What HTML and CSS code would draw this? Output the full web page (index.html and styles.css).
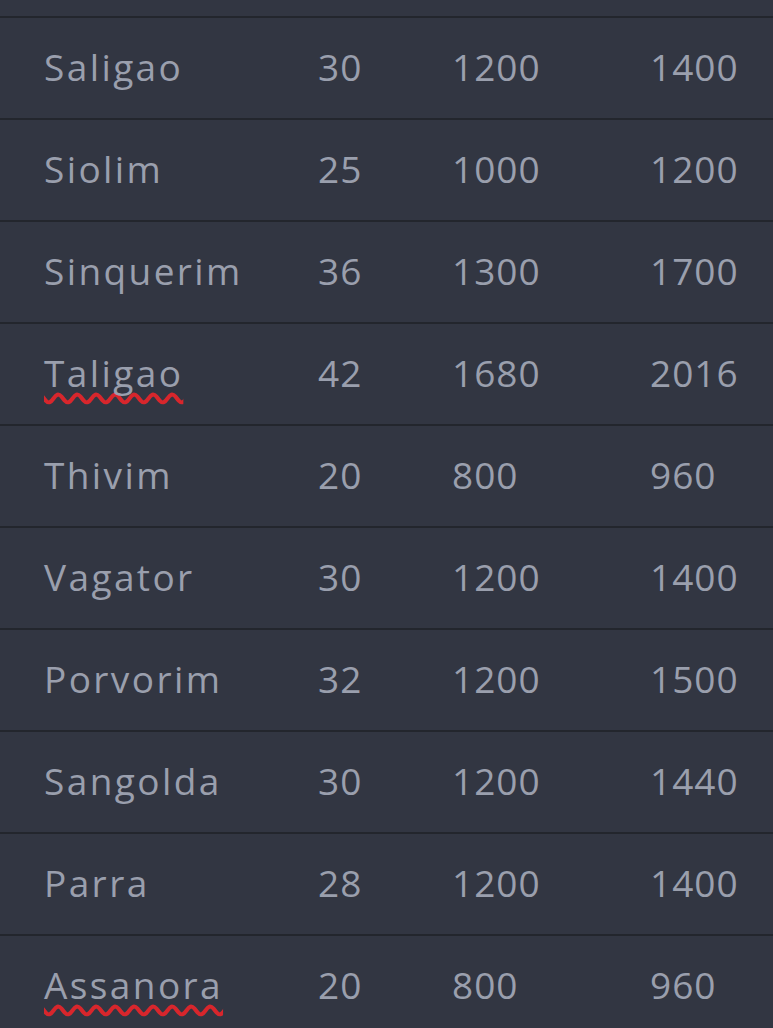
FILE: index.html
```html
<!DOCTYPE html>
<html lang="en">
<head>
<meta charset="utf-8">
<title>Rates</title>
<link rel="stylesheet" href="styles.css">
</head>
<body>
<div class="table">
  <div class="row row-partial"></div>
  <div class="row"><span class="name">Saligao</span><span>30</span><span>1200</span><span>1400</span></div>
  <div class="row"><span class="name">Siolim</span><span>25</span><span>1000</span><span>1200</span></div>
  <div class="row"><span class="name">Sinquerim</span><span>36</span><span>1300</span><span>1700</span></div>
  <div class="row"><span class="name misspelled">Taligao</span><span>42</span><span>1680</span><span>2016</span></div>
  <div class="row"><span class="name">Thivim</span><span>20</span><span>800</span><span>960</span></div>
  <div class="row"><span class="name">Vagator</span><span>30</span><span>1200</span><span>1400</span></div>
  <div class="row"><span class="name">Porvorim</span><span>32</span><span>1200</span><span>1500</span></div>
  <div class="row"><span class="name">Sangolda</span><span>30</span><span>1200</span><span>1440</span></div>
  <div class="row"><span class="name">Parra</span><span>28</span><span>1200</span><span>1400</span></div>
  <div class="row"><span class="name misspelled">Assanora</span><span>20</span><span>800</span><span>960</span></div>
</div>
</body>
</html>
```
FILE: styles.css
```css
html, body {
  margin: 0;
  padding: 0;
  background: #323642;
  height: 100%;
  overflow: hidden;
}
body {
  font-family: "Open Sans", "Liberation Sans", sans-serif;
  color: #9a9fad;
}
.table {
  display: flex;
  flex-direction: column;
}
.row {
  display: grid;
  grid-template-columns: 274px 134px 198px 1fr;
  align-items: center;
  height: 96px;
  padding-bottom: 4px;
  padding-left: 44px;
  border-bottom: 2px solid #23262d;
  font-size: 37px;
  letter-spacing: 1px;
  line-height: 1;
}
.row-partial {
  height: 16px;
  padding-bottom: 0;
}
.row span {
  white-space: nowrap;
}
.row .name {
  letter-spacing: 2.4px;
}
.misspelled {
  text-decoration: underline wavy #d8262c;
  text-decoration-thickness: 3.5px;
  text-underline-offset: 6px;
  text-decoration-skip-ink: none;
}
```
